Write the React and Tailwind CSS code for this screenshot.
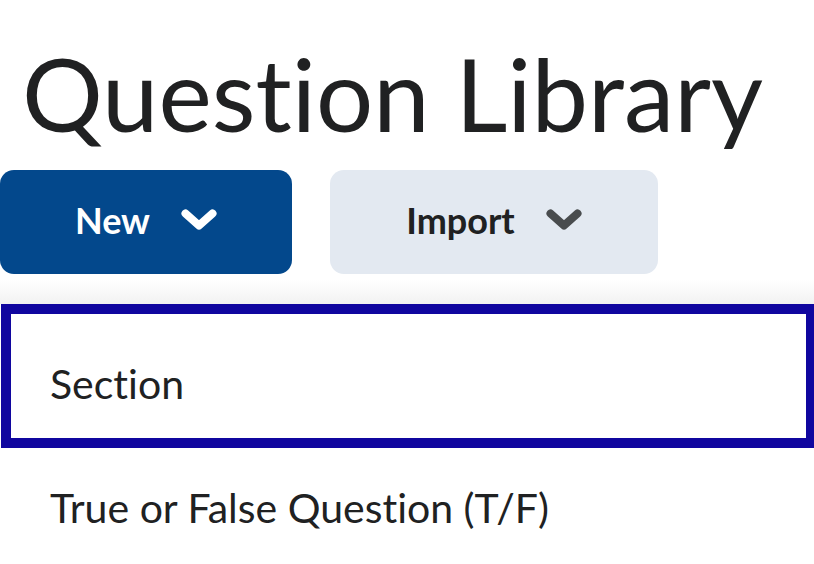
import React from "react";

function Chevron({ color }) {
  return (
    <svg width="36" height="22" viewBox="0 0 36 22" fill="none">
      <path d="M4.5 4.5 L18 16.5 L31.5 4.5" stroke={color} strokeWidth="8" strokeLinecap="round" strokeLinejoin="round" />
    </svg>
  );
}

export default function App() {
  return (
    <div className="w-[814px] h-[564px] overflow-hidden bg-white text-[#202122] [font-variant-ligatures:none]" style={{ fontFamily: "Lato, 'Noto Sans', sans-serif" }}>
      <h1 className="mt-[43px] ml-[22px] text-[101px] leading-none font-normal whitespace-nowrap">Question Library</h1>
      <div className="mt-[26px] flex gap-[38px]">
        <button className="w-[292px] h-[104px] pb-[4px] rounded-[14px] bg-[#03488c] text-white flex items-center justify-center gap-[31px] text-[36px] font-bold leading-none">
          <span>New</span>
          <Chevron color="#ffffff" />
        </button>
        <button className="w-[328px] h-[104px] pb-[4px] rounded-[14px] bg-[#e3e9f1] text-[#202122] flex items-center justify-center gap-[31px] text-[36px] font-bold leading-none">
          <span>Import</span>
          <Chevron color="#494c4e" />
        </button>
      </div>
      <div className="mt-[6px] h-[24px] bg-gradient-to-b from-white to-[#f2f2f2]"></div>
      <div className="pt-[10px] pl-[11px] w-[806px]">
        <div className="h-[124px] outline-[10px] outline-solid outline-[#10069f] pl-[39px] pt-[49px] text-[41px] leading-none">Section</div>
        <div className="h-[124px] pl-[39px] pt-[49px] text-[41px] leading-none">True or False Question (T/F)</div>
      </div>
    </div>
  );
}
